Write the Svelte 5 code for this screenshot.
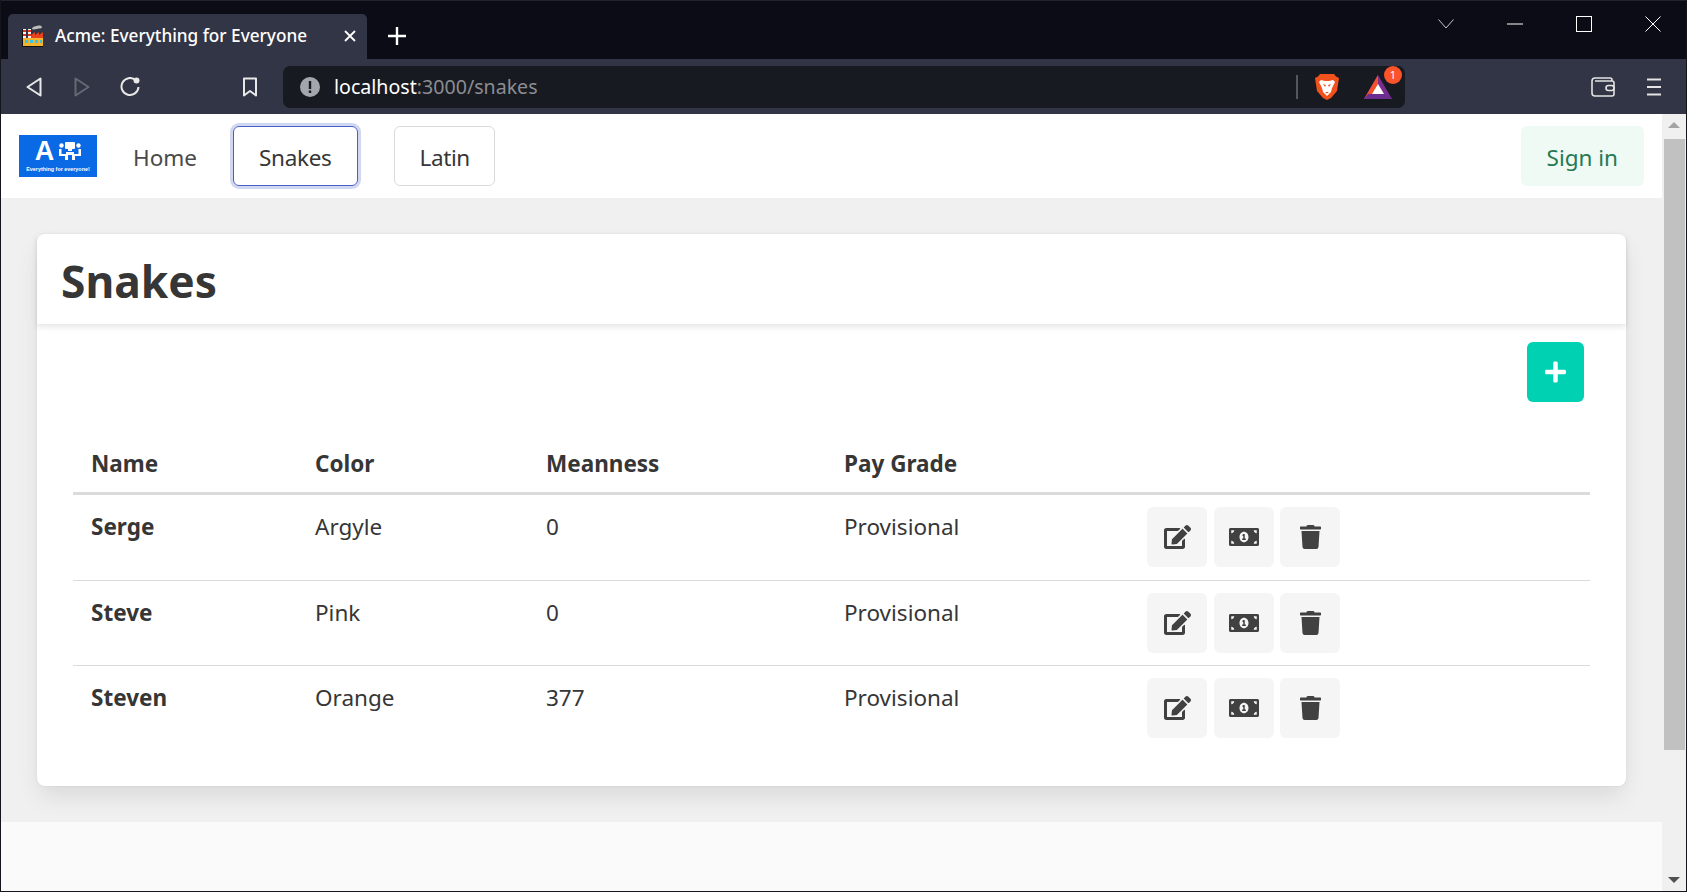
<script lang="ts">
  const snakes = [
    { name: "Serge", color: "Argyle", meanness: 0, grade: "Provisional" },
    { name: "Steve", color: "Pink", meanness: 0, grade: "Provisional" },
    { name: "Steven", color: "Orange", meanness: 377, grade: "Provisional" },
  ];

  const editPath =
    "M402.6 83.2l90.2 90.2c3.8 3.8 3.8 10 0 13.8L274.4 405.6l-92.8 10.3c-12.4 1.4-22.9-9.1-21.5-21.5l10.3-92.8L388.8 83.2c3.8-3.8 10-3.8 13.8 0zm162-22.9l-48.8-48.8c-15.2-15.2-39.9-15.2-55.2 0l-35.4 35.4c-3.8 3.8-3.8 10 0 13.8l90.2 90.2c3.8 3.8 10 3.8 13.8 0l35.4-35.4c15.2-15.3 15.2-40 0-55.2zM384 346.2V448H64V128h229.8c3.2 0 6.2-1.3 8.5-3.5l40-40c7.6-7.6 2.2-20.5-8.5-20.5H48C21.5 64 0 85.5 0 112v352c0 26.5 21.5 48 48 48h352c26.5 0 48-21.5 48-48V306.2c0-10.7-12.9-16-20.5-8.5l-40 40c-2.2 2.3-3.5 5.3-3.5 8.5z";
  const moneyPath =
    "M352 288h-16v-88c0-4.42-3.58-8-8-8h-13.58c-4.74 0-9.37 1.4-13.31 4.03l-15.33 10.22a7.994 7.994 0 0 0-2.22 11.09l8.88 13.31a7.994 7.994 0 0 0 11.09 2.22l.47-.31V288h-16c-4.42 0-8 3.58-8 8v16c0 4.42 3.58 8 8 8h64c4.42 0 8-3.58 8-8v-16c0-4.42-3.58-8-8-8zM608 64H32C14.33 64 0 78.33 0 96v320c0 17.67 14.33 32 32 32h576c17.67 0 32-14.33 32-32V96c0-17.67-14.33-32-32-32zM48 400v-64c35.35 0 64 28.65 64 64H48zm0-224v-64h64c0 35.35-28.65 64-64 64zm272 192c-53.02 0-96-50.15-96-112 0-61.86 42.98-112 96-112s96 50.14 96 112c0 61.87-43 112-96 112zm272 32h-64c0-35.35 28.65-64 64-64v64zm0-224c-35.35 0-64-28.65-64-64h64v64z";
  const trashPath =
    "M432 32H312l-9.4-18.7A24 24 0 0 0 281.1 0H166.8a23.72 23.72 0 0 0-21.4 13.3L136 32H16A16 16 0 0 0 0 48v32a16 16 0 0 0 16 16h416a16 16 0 0 0 16-16V48a16 16 0 0 0-16-16zM53.2 467a48 48 0 0 0 47.9 45h245.8a48 48 0 0 0 47.9-45L416 128H32z";
  const plusPath =
    "M416 208H272V64c0-17.67-14.33-32-32-32h-32c-17.67 0-32 14.33-32 32v144H32c-17.67 0-32 14.33-32 32v32c0 17.67 14.33 32 32 32h144v144c0 17.67 14.33 32 32 32h32c17.67 0 32-14.33 32-32V304h144c17.67 0 32-14.33 32-32v-32c0-17.67-14.33-32-32-32z";
</script>

<div class="window">
  <!-- browser chrome -->
  <div class="titlebar">
    <div class="tab">
      <svg class="favicon" viewBox="0 0 22 22" width="22" height="22">
        <path d="M10 4c0-2 3-3 5-3 2-1 5 0 5 1 0 2-3 1-5 2-2 0-4 1-5 0z" fill="#bdbdbd" />
        <path d="M1 4h3v10H1zM6 4h3v10H6z" fill="#f4f4f4" />
        <path d="M1 5h3v2H1zM6 5h3v2H6zM1 9h3v2H1zM6 9h3v2H6z" fill="#d9361f" />
        <path d="M9 14V10l4-3v3l4-3v3l4-3v7z" fill="#e8431c" />
        <rect x="1" y="13" width="20" height="8" fill="#f6b42c" />
        <path d="M3 15h3v3H3zM8 15h3v3H8zM13 15h3v3h-3zM18 15h2v3h-2z" fill="#35c5e8" />
        <path d="M.5 4v17.500H21" fill="none" stroke="#111" />
      </svg>
      <span class="tab-title">Acme: Everything for Everyone</span>
      <svg class="tab-close" viewBox="0 0 12 12" width="12" height="12">
        <path d="M1 1l10 10M11 1L1 11" stroke="#fff" stroke-width="1.8" />
      </svg>
    </div>
    <svg class="new-tab" viewBox="0 0 18 18" width="18" height="18">
      <path d="M9 0v18M0 9h18" stroke="#fff" stroke-width="2.4" />
    </svg>
    <div class="window-controls">
      <span class="ctl"><svg viewBox="0 0 16 10" width="16" height="10"><path d="M.5 .5L8 9l7.500-8.500" fill="none" stroke="#c8c8c8" /></svg></span>
      <span class="ctl"><svg viewBox="0 0 16 2" width="16" height="2"><path d="M0 1h16" stroke="#fff" /></svg></span>
      <span class="ctl"><svg viewBox="0 0 16 16" width="16" height="16"><rect x=".5" y=".5" width="15" height="15" fill="none" stroke="#fff" /></svg></span>
      <span class="ctl"><svg viewBox="0 0 16 16" width="16" height="16"><path d="M.5 .5l15 15M15.500 .5l-15 15" stroke="#fff" /></svg></span>
    </div>
  </div>

  <div class="toolbar">
    <svg class="tool back" viewBox="0 0 16 20" width="16" height="20"><path d="M14.500 1.500v17L1.500 10z" fill="none" stroke="#e8e8e8" stroke-width="2" stroke-linejoin="round" /></svg>
    <svg class="tool forward" viewBox="0 0 16 20" width="16" height="20"><path d="M1.500 1.500v17l13-8.500z" fill="none" stroke="#666974" stroke-width="2" stroke-linejoin="round" /></svg>
    <svg class="tool reload" viewBox="0 0 20 20" width="20" height="20">
      <path d="M15.500 3A8.500 8.500 0 1 0 18.500 10" fill="none" stroke="#e8e8e8" stroke-width="2" />
      <circle cx="16.500" cy="3.500" r="3" fill="#e8e8e8" />
    </svg>
    <svg class="tool bookmark" viewBox="0 0 16 20" width="16" height="20"><path d="M2 1.500h12v17l-6-4.500-6 4.500z" fill="none" stroke="#e8e8e8" stroke-width="2" stroke-linejoin="round" /></svg>
    <div class="urlbar">
      <svg class="info" viewBox="0 0 20 20" width="20" height="20">
        <circle cx="10" cy="10" r="10" fill="#a4a6ad" />
        <rect x="8.800" y="4" width="2.400" height="8" fill="#181a21" />
        <rect x="8.800" y="13.500" width="2.400" height="2.500" fill="#181a21" />
      </svg>
      <span class="url"><span class="host">localhost</span>:3000/snakes</span>
      <span class="sep"></span>
      <svg class="brave" viewBox="0 0 24 28" width="24" height="28">
        <path d="M5 1h14l2 2.500L24 5l-2 13-6 7-4 2-4-2-6-7L0 5l3-1.500z" fill="#f1511b" />
        <path d="M6 7l4 1h4l4-1 2 2-3 6-1 4-4 4-4-4-1-4-3-6z" fill="#fff" />
        <path d="M8 11l3 1-1 2zM16 11l-3 1 1 2zM10 19h4l-2 1.500z" fill="#f1511b" />
      </svg>
      <span class="bat">
        <svg viewBox="0 0 28 24" width="28" height="24">
          <path d="M14 0L0 24h28z" fill="#7b2d8e" />
          <path d="M14 0L0 24l8-4 6-11z" fill="#f1502a" />
          <path d="M0 24l4-5h20l4 5z" fill="#6c2d91" />
          <path d="M14 9l-6 10h12z" fill="#fff" />
        </svg>
        <span class="badge">1</span>
      </span>
    </div>
    <svg class="tool wallet" viewBox="0 0 24 20" width="24" height="20">
      <path d="M21 4V3a2 2 0 0 0-2-2H4a3 3 0 0 0-3 3v12a3 3 0 0 0 3 3h17a2 2 0 0 0 2-2V6a2 2 0 0 0-2-2H4" fill="none" stroke="#e4e4e4" stroke-width="1.600" />
      <rect x="15" y="8.500" width="8" height="5" rx="2.500" fill="#323545" stroke="#e4e4e4" stroke-width="1.600" />
    </svg>
    <svg class="tool menu" viewBox="0 0 14 18" width="14" height="18"><path d="M0 1.500h14M0 9h14M0 16.500h14" stroke="#e4e4e4" stroke-width="2" /></svg>
  </div>

  <div class="viewport">
    <div class="page">
      <nav class="navbar">
        <div class="logo">
          <div class="logo-top">
            <span class="logo-a">A</span>
            <svg viewBox="0 0 22 18" width="22" height="18">
              <rect x="6" y="0" width="10" height="7" rx="1" fill="#fff" />
              <path d="M9 7h4v2H9z" fill="#fff" />
              <circle cx="2.500" cy="3.500" r="2.200" fill="#fff" />
              <circle cx="19.500" cy="3.500" r="2.200" fill="#fff" />
              <path d="M0 7h2.500v5H7v-2h8v2h4.500V7H22v7h-6v4h-3v-5H9v5H6v-4H0z" fill="#fff" />
            </svg>
          </div>
          <span class="logo-text">Everything for everyone!</span>
        </div>
        <a class="nav-item home">Home</a>
        <a class="nav-item snakes">Snakes</a>
        <a class="nav-item latin">Latin</a>
        <a class="nav-item signin">Sign in</a>
      </nav>

      <main class="content">
        <section class="card">
          <header class="card-header"><h1>Snakes</h1></header>
          <div class="card-body">
            <div class="toolbar-row">
              <button class="add">
                <svg viewBox="0 0 448 512" width="21" height="24"><path d={plusPath} fill="#fff" /></svg>
              </button>
            </div>
            <table>
              <colgroup>
                <col class="c-name" />
                <col class="c-color" />
                <col class="c-mean" />
                <col class="c-grade" />
                <col />
              </colgroup>
              <thead>
                <tr>
                  <th>Name</th>
                  <th>Color</th>
                  <th>Meanness</th>
                  <th>Pay Grade</th>
                  <th></th>
                </tr>
              </thead>
              <tbody>
                {#each snakes as s}
                  <tr>
                    <td class="name">{s.name}</td>
                    <td>{s.color}</td>
                    <td>{s.meanness}</td>
                    <td>{s.grade}</td>
                    <td>
                      <div class="actions">
                        <button class="action"><svg viewBox="0 0 576 512" width="27" height="24"><path d={editPath} /></svg></button>
                        <button class="action"><svg viewBox="0 0 640 512" width="30" height="24"><path d={moneyPath} /></svg></button>
                        <button class="action"><svg viewBox="0 0 448 512" width="21" height="24"><path d={trashPath} /></svg></button>
                      </div>
                    </td>
                  </tr>
                {/each}
              </tbody>
            </table>
          </div>
        </section>
      </main>

      <footer class="footer"></footer>
    </div>

    <div class="scrollbar">
      <span class="arrow up"></span>
      <span class="thumb"></span>
      <span class="arrow down"></span>
    </div>
  </div>
</div>

<style>
  :global(body) {
    margin: 0;
    overflow: hidden;
  }

  .window {
    width: 1687px;
    height: 892px;
    box-sizing: border-box;
    border: 1px solid #14151c;
    border-top: 0;
    display: flex;
    flex-direction: column;
    font-family: "Noto Sans", sans-serif;
    color: #363636;
    font-size: 22.5px;
  }

  /* browser chrome */
  .titlebar {
    height: 59px;
    flex: none;
    background: #0b0c15;
    display: flex;
    align-items: flex-end;
    box-sizing: border-box;
    border-top: 1px solid #23242b;
  }
  .tab {
    width: 359px;
    height: 45px;
    margin-left: 7px;
    background: #323545;
    border-radius: 5px 5px 0 0;
    display: flex;
    align-items: center;
    box-sizing: border-box;
    padding: 0 11px 2px 14px;
  }
  .favicon {
    flex: none;
  }
  .tab-title {
    margin-left: 11px;
    color: #fff;
    font-size: 17.2px;
    font-weight: 500;
    flex: 1;
    white-space: nowrap;
  }
  .new-tab {
    margin: 0 0 14px 21px;
  }
  .window-controls {
    margin: 0 -1px 0 auto;
    align-self: flex-start;
    display: flex;
    padding-top: 15px;
  }
  .ctl {
    width: 69px;
    height: 16px;
    display: flex;
    align-items: center;
    justify-content: center;
  }

  .toolbar {
    height: 55px;
    flex: none;
    background: #323545;
    display: flex;
    align-items: center;
  }
  .tool {
    flex: none;
  }
  .back {
    margin-left: 25px;
  }
  .forward {
    margin-left: 32px;
  }
  .reload {
    margin-left: 30px;
  }
  .bookmark {
    margin-left: 102px;
  }
  .urlbar {
    width: 1122px;
    height: 42px;
    margin-left: 25px;
    flex: none;
    background: #181a21;
    border-radius: 7px;
    display: flex;
    align-items: center;
    box-sizing: border-box;
    padding-left: 17px;
  }
  .url {
    margin-left: 14px;
    color: #8b8d93;
    font-size: 19.6px;
    flex: 1;
  }
  .host {
    color: #fff;
  }
  .sep {
    width: 2px;
    height: 24px;
    background: #55575e;
  }
  .brave {
    margin-left: 17px;
  }
  .bat {
    position: relative;
    margin: 0 13px 0 25px;
    height: 24px;
  }
  .badge {
    position: absolute;
    top: -9px;
    left: 20px;
    width: 18px;
    height: 18px;
    border-radius: 50%;
    background: #fb542b;
    color: #fff;
    font-size: 11px;
    line-height: 18px;
    text-align: center;
  }
  .wallet {
    margin-left: 186px;
  }
  .menu {
    margin-left: 32px;
  }

  /* page */
  .viewport {
    flex: 1;
    min-height: 0;
    display: flex;
  }
  .page {
    flex: 1;
    display: flex;
    flex-direction: column;
    background: #f0f0f0;
    min-width: 0;
  }
  .navbar {
    height: 84px;
    flex: none;
    background: #fff;
    display: flex;
    align-items: center;
    box-sizing: border-box;
    padding: 0 18px;
  }
  .logo {
    width: 78px;
    height: 42px;
    background: #0a6ae6;
    display: flex;
    flex-direction: column;
    align-items: center;
    color: #fff;
    overflow: hidden;
  }
  .logo-top {
    display: flex;
    align-items: center;
    gap: 5px;
    height: 30px;
    padding-top: 2px;
    box-sizing: border-box;
  }
  .logo-a {
    font-family: "Liberation Sans", sans-serif;
    font-weight: 700;
    font-size: 27px;
    line-height: 28px;
  }
  .logo-text {
    font-family: "Liberation Sans", sans-serif;
    font-weight: 700;
    font-size: 5.4px;
    line-height: 8px;
    white-space: nowrap;
  }
  .nav-item {
    height: 60px;
    box-sizing: border-box;
    padding: 2px 25px 0;
    border: 1px solid transparent;
    border-radius: 6px;
    display: flex;
    align-items: center;
    color: #4a4a4a;
  }
  .home {
    margin-left: 10px;
  }
  .snakes {
    margin-left: 10px;
    border-color: #485fc7;
    box-shadow: 0 0 0 3px rgba(72, 95, 199, 0.25);
    color: #363636;
    letter-spacing: -0.3px;
  }
  .latin {
    margin-left: 36px;
    padding: 2px 24px 0 25px;
    border-color: #dbdbdb;
    color: #363636;
    letter-spacing: -0.4px;
  }
  .signin {
    margin-left: auto;
    background: #effaf5;
    color: #257953;
  }

  .content {
    padding: 36px 36px 36px;
  }
  .card {
    background: #fff;
    border-radius: 8px;
    box-shadow: 0 12px 24px -3px rgba(10, 10, 10, 0.1), 0 0 0 1.500px rgba(10, 10, 10, 0.02);
    height: 552px;
    box-sizing: border-box;
  }
  .card-header {
    height: 90px;
    box-sizing: border-box;
    padding: 5px 24px 0;
    display: flex;
    align-items: center;
    box-shadow: 0 3px 6px rgba(10, 10, 10, 0.1);
  }
  h1 {
    margin: 0;
    font-size: 44.3px;
    font-weight: 700;
    line-height: 1;
  }
  .card-body {
    padding: 18px 36px 0;
  }
  .toolbar-row {
    display: flex;
    justify-content: flex-end;
    padding-right: 6px;
    margin-bottom: 31px;
  }
  button {
    border: 0;
    padding: 0;
    display: flex;
    align-items: center;
    justify-content: center;
    border-radius: 6px;
  }
  .add {
    width: 57px;
    height: 60px;
    background: #00d1b2;
  }
  table {
    width: 100%;
    table-layout: fixed;
    border-collapse: collapse;
  }
  .c-name {
    width: 224px;
  }
  .c-color {
    width: 231px;
  }
  .c-mean {
    width: 298px;
  }
  .c-grade {
    width: 303px;
  }
  th,
  td {
    padding: 14px 18px 12px;
    line-height: 36px;
    text-align: left;
    vertical-align: top;
    border-bottom: 1.500px solid #dbdbdb;
  }
  th {
    padding: 13px 18px 10px;
    font-weight: 700;
    border-bottom-width: 3px;
  }
  tbody tr:first-child td {
    padding: 14px 18px 13px;
  }
  tbody tr:last-child td {
    border-bottom: 0;
  }
  .name {
    font-weight: 700;
  }
  .actions {
    display: flex;
    gap: 6.5px;
    margin-top: -2px;
  }
  .action {
    width: 60px;
    height: 60px;
    background: #f5f5f5;
  }
  .action svg {
    fill: #414141;
  }
  .footer {
    flex: 1;
    background: #fafafa;
  }

  .scrollbar {
    width: 24px;
    flex: none;
    background: #f0f0f0;
    display: flex;
    flex-direction: column;
    align-items: center;
  }
  .arrow {
    flex: none;
    width: 0;
    height: 0;
    border-left: 6px solid transparent;
    border-right: 6px solid transparent;
  }
  .up {
    margin-top: 8px;
    border-bottom: 6px solid #a3a3a3;
  }
  .down {
    margin: auto 0 8px;
    border-top: 6px solid #505050;
  }
  .thumb {
    width: 21px;
    height: 611px;
    margin-top: 11px;
    background: #c1c1c1;
  }
</style>
